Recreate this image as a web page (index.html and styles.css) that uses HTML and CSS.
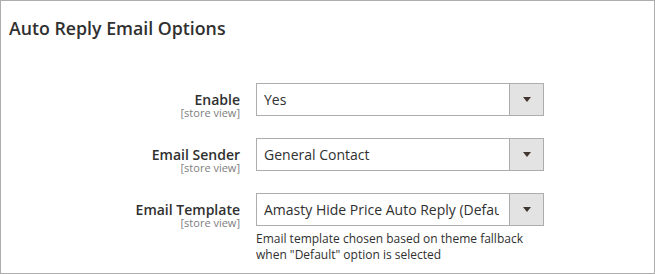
FILE: index.html
```html
<!DOCTYPE html>
<html lang="en">

<head>
    <meta charset="UTF-8" />
    <title>Auto Reply Email Options</title>
    <link rel="stylesheet" href="styles.css">
</head>

<body>
    <div class="section">
        <h2 class="section-title">Auto Reply Email Options</h2>

        <div class="fields">
            <div class="field-row">
                <div class="field-label">
                    <span class="label-text">Enable</span>
                    <span class="scope">[store view]</span>
                </div>
                <div class="field-control">
                    <div class="select-box">
                        <span class="select-value">Yes</span>
                        <span class="select-button"><span class="arrow"></span></span>
                    </div>
                </div>
            </div>

            <div class="field-row">
                <div class="field-label">
                    <span class="label-text">Email Sender</span>
                    <span class="scope">[store view]</span>
                </div>
                <div class="field-control">
                    <div class="select-box">
                        <span class="select-value">General Contact</span>
                        <span class="select-button"><span class="arrow"></span></span>
                    </div>
                </div>
            </div>

            <div class="field-row">
                <div class="field-label">
                    <span class="label-text">Email Template</span>
                    <span class="scope">[store view]</span>
                </div>
                <div class="field-control">
                    <div class="select-box">
                        <span class="select-value">Amasty Hide Price Auto Reply (Default)</span>
                        <span class="select-button"><span class="arrow"></span></span>
                    </div>
                    <p class="note">Email template chosen based on theme fallback<br>when "Default" option is selected</p>
                </div>
            </div>
        </div>
    </div>
</body>

</html>
```

FILE: styles.css
```css
body {
    margin: 0;
    font-family: 'Open Sans', sans-serif;
    color: #303030;
    background: #ffffff;
}

.section {
    box-sizing: border-box;
    width: 655px;
    height: 274px;
    border: 1px solid #adadad;
    padding: 17px 0 0 8px;
}

.section-title {
    margin: 0;
    font-size: 17.75px;
    font-weight: 600;
    line-height: 20px;
    color: #303030;
}

.fields {
    margin-top: 45px;
}

.field-row {
    display: flex;
    margin-bottom: 22px;
}

.field-label {
    box-sizing: border-box;
    width: 231px;
    height: 33px;
    margin-right: 16px;
    text-align: right;
    padding-top: 7px;
}

.label-text {
    display: block;
    font-size: 14px;
    font-weight: 600;
    line-height: 19px;
}

.scope {
    display: block;
    font-size: 11px;
    line-height: 11px;
    margin-top: -2px;
    color: #808080;
}

.field-control {
    width: 288px;
}

.select-box {
    box-sizing: border-box;
    display: flex;
    height: 33px;
    border: 1px solid #adadad;
    background: #ffffff;
}

.select-value {
    flex: 1;
    overflow: hidden;
    white-space: nowrap;
    padding: 0 10px 0 7px;
    margin-right: 0;
    font-size: 14px;
    line-height: 31px;
    clip-path: inset(0 10px 0 0);
}

.select-button {
    width: 33px;
    border-left: 1px solid #adadad;
    background: #e3e3e3;
    display: flex;
    align-items: center;
    justify-content: center;
}

.arrow {
    width: 0;
    height: 0;
    border-left: 4px solid transparent;
    border-right: 4px solid transparent;
    border-top: 5px solid #41362f;
}

.note {
    margin: 5px 0 0;
    font-size: 12px;
    line-height: 16px;
}
```
